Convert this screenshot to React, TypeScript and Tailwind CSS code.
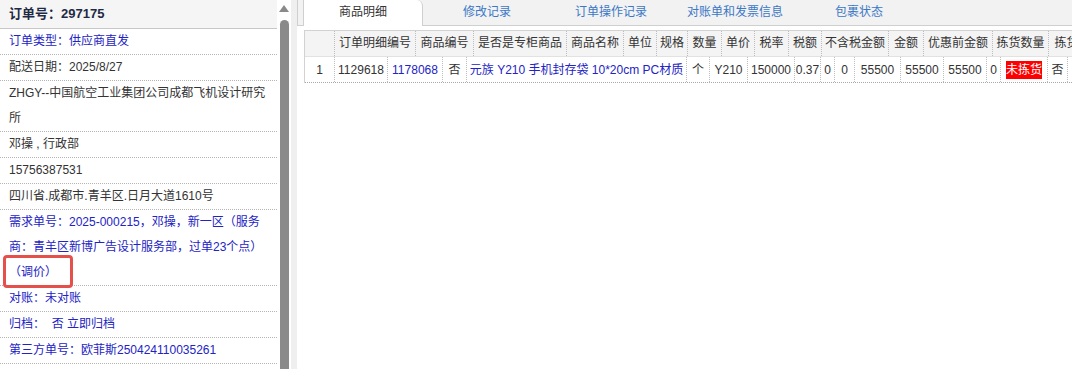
import React from 'react';

type InfoRow = { text: string; blue?: boolean };

const infoRows: InfoRow[] = [
  { text: '订单类型：供应商直发', blue: true },
  { text: '配送日期：2025/8/27' },
  { text: 'ZHGY--中国航空工业集团公司成都飞机设计研究所' },
  { text: '邓操 , 行政部' },
  { text: '15756387531' },
  { text: '四川省.成都市.青羊区.日月大道1610号' },
  { text: '需求单号：2025-000215，邓操，新一区（服务商：青羊区新博广告设计服务部，过单23个点）（调价）', blue: true },
  { text: '对账：未对账', blue: true },
  { text: '归档：\u00a0 否 立即归档', blue: true },
  { text: '第三方单号：欧菲斯250424110035261', blue: true },
];

const tabs = ['商品明细', '修改记录', '订单操作记录', '对账单和发票信息', '包裹状态'];

const headCols: [string, number][] = [
  ['', 30],
  ['订单明细编号', 81],
  ['商品编号', 58],
  ['是否是专柜商品', 93],
  ['商品名称', 57],
  ['单位', 33],
  ['规格', 31],
  ['数量', 34],
  ['单价', 33],
  ['税率', 34],
  ['税额', 33],
  ['不含税金额', 67],
  ['金额', 35],
  ['优惠前金额', 69],
  ['拣货数量', 56],
  ['拣货状态', 60],
];

type Cell = { text: string; w: number; blue?: boolean; tag?: boolean };

const dataCols: Cell[] = [
  { text: '1', w: 30 },
  { text: '1129618', w: 53 },
  { text: '1178068', w: 55, blue: true },
  { text: '否', w: 24 },
  { text: '元族 Y210 手机封存袋 10*20cm PC材质', w: 220, blue: true },
  { text: '个', w: 23 },
  { text: 'Y210', w: 38 },
  { text: '150000', w: 47 },
  { text: '0.37', w: 26 },
  { text: '0', w: 14 },
  { text: '0', w: 20 },
  { text: '55500', w: 46 },
  { text: '55500', w: 43 },
  { text: '55500', w: 43 },
  { text: '0', w: 14 },
  { text: '未拣货', w: 47, tag: true },
  { text: '否', w: 20 },
  { text: '', w: 60 },
];

export default function App() {
  return (
    <div
      className="flex h-[369px] w-[1072px] overflow-hidden bg-white text-[12px] text-[#333]"
      style={{ fontFamily: '"Liberation Sans", "Noto Sans CJK SC", sans-serif' }}
    >
      {/* Left: order info */}
      <div className="relative w-[277px] shrink-0 bg-white">
        <div className="h-[29px] border-b border-[#c8c8c8] bg-[#f5f5f5] pl-[9px] text-[13px] font-bold leading-[28px] text-[#1f2a44]">
          订单号：297175
        </div>
        {infoRows.map((row, i) => (
          <div
            key={i}
            className={`border-b border-dotted border-[#b5b5b5] pl-[9px] pr-[8px] leading-[25px] ${row.blue ? 'text-[#2323c4]' : 'text-[#333]'}`}
          >
            {row.text}
          </div>
        ))}
        {/* annotation */}
        <div className="absolute left-[3px] top-[255px] h-[33px] w-[70px] rounded-[4px] border-[3px] border-[#e5504a]" />
      </div>

      {/* Scrollbar */}
      <div className="flex w-[14px] shrink-0 flex-col items-center bg-white pt-[5px]">
        <svg width="10" height="7" viewBox="0 0 10 7">
          <polygon points="5,0 10,7 0,7" fill="#8a8a8a" />
        </svg>
        <div className="mt-[8px] w-[9px] flex-1 rounded-t-full bg-[#8a8a8a]" />
      </div>
      <div className="w-[6px] shrink-0 bg-[#efefef]" />

      {/* Right: tabs + table */}
      <div className="min-w-0 flex-1 overflow-hidden bg-white">
        <div className="flex h-[26px] border-b border-l border-[#cfcfcf] bg-[#f2f2f2] pl-[5px]">
          {tabs.map((t, i) =>
            i === 0 ? (
              <div
                key={t}
                className="-mb-px mr-[2px] h-[26px] w-[120px] shrink-0 rounded-tr-[6px] border-x border-[#cfcfcf] bg-white text-center leading-[25px] text-[#333]"
              >
                {t}
              </div>
            ) : (
              <div key={t} className="w-[124px] shrink-0 text-center leading-[25px] text-[#3b78c6]">
                {t}
              </div>
            )
          )}
        </div>

        <div className="ml-[7px] mt-[4px] w-max border-l border-t border-[#d2d2d2]">
          <div className="flex h-[26px] border-b border-[#e2e2e2] bg-[#f4f4f4]">
            {headCols.map(([t, w], i) => (
              <div
                key={i}
                style={{ width: w }}
                className="shrink-0 overflow-hidden whitespace-nowrap border-r border-dotted border-[#bdbdbd] text-center leading-[25px]"
              >
                {t}
              </div>
            ))}
          </div>
          <div className="flex h-[26px] border-b border-dotted border-[#a8a8a8]">
            {dataCols.map((c, i) => (
              <div
                key={i}
                style={{ width: c.w }}
                className={`flex shrink-0 items-center justify-center overflow-hidden whitespace-nowrap border-r border-dotted border-[#bdbdbd] ${c.blue ? 'text-[#2323c4]' : 'text-[#333]'}`}
              >
                {c.tag ? (
                  <span className="bg-[#ff0000] leading-[18px] text-white">{c.text}</span>
                ) : (
                  c.text
                )}
              </div>
            ))}
          </div>
        </div>
      </div>
    </div>
  );
}
